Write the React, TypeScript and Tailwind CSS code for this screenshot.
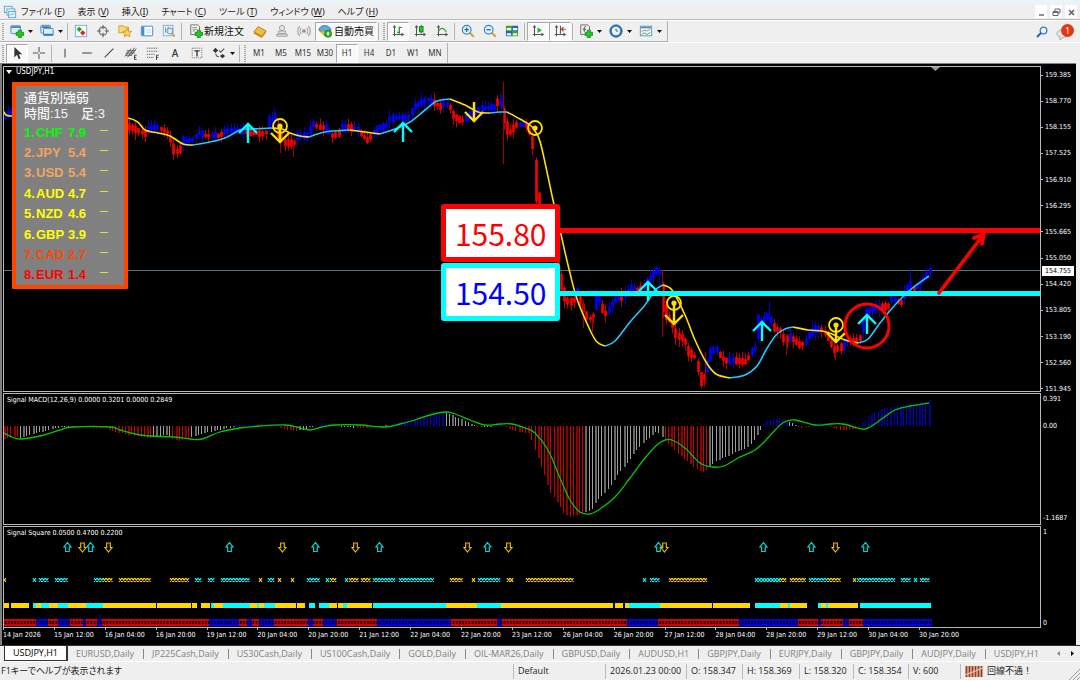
import type { ReactNode } from 'react';
import clsx from 'clsx';

type Point = [number, number];
type Waypoint = [number, number, string];
type Span = [number, number, 'y' | 'c' | 'r' | 'b'];

const BAR = 3.177;
const COLORS = { y: '#ffd700', c: '#00ffff', r: '#e00000', b: '#0000f0' };

// Price path: x, middle of the candle, r = bearish / b = bullish
const PRICE: Waypoint[] = [
  [4, 118, 'b'], [10, 112, 'b'], [14, 114, 'r'], [130, 127, 'r'], [137, 130, 'r'], [145, 134, 'r'], [149, 128, 'b'], [157, 127, 'b'],
  [163, 130, 'r'], [168, 133, 'r'], [171, 141, 'r'], [174, 151, 'r'], [179, 152, 'r'], [182, 141, 'b'], [192, 140, 'b'],
  [199, 133, 'b'], [207, 136, 'r'], [213, 135, 'b'], [219, 136, 'r'], [225, 131, 'b'], [240, 130, 'b'], [250, 133, 'r'],
  [265, 134, 'r'], [269, 121, 'b'], [275, 118, 'b'], [278, 130, 'r'], [284, 143, 'r'], [294, 143, 'r'], [297, 136, 'b'],
  [308, 136, 'b'], [312, 124, 'b'], [319, 127, 'r'], [327, 128, 'b'], [331, 136, 'r'], [338, 134, 'r'], [342, 127, 'b'],
  [350, 128, 'r'], [357, 129, 'b'], [361, 134, 'r'], [368, 141, 'r'], [372, 134, 'b'], [378, 128, 'b'], [386, 126, 'b'],
  [390, 118, 'b'], [402, 118, 'b'], [409, 117, 'b'], [414, 107, 'b'], [420, 103, 'b'], [428, 99, 'b'], [434, 103, 'r'],
  [441, 107, 'r'], [444, 102, 'b'], [449, 106, 'r'], [454, 117, 'r'], [463, 121, 'r'], [467, 117, 'b'], [480, 109, 'b'],
  [493, 107, 'b'], [496, 108, 'r'], [499, 96, 'b'], [503, 112, 'r'], [506, 127, 'r'], [511, 133, 'r'], [515, 125, 'r'],
  [521, 124, 'b'], [527, 126, 'r'], [532, 138, 'r'], [535, 175, 'r'], [538, 205, 'r'], [545, 225, 'r'], [552, 240, 'r'],
  [558, 268, 'r'], [563, 292, 'r'], [567, 301, 'r'], [573, 302, 'r'], [577, 292, 'b'], [582, 305, 'r'], [587, 317, 'r'],
  [592, 320, 'r'], [595, 303, 'b'], [599, 300, 'b'], [602, 308, 'r'], [606, 314, 'r'], [609, 309, 'b'], [615, 300, 'b'],
  [621, 297, 'r'], [626, 294, 'b'], [632, 287, 'b'], [638, 291, 'r'], [643, 286, 'b'], [650, 278, 'b'], [656, 271, 'b'],
  [659, 268, 'b'], [662, 295, 'r'], [666, 313, 'r'], [672, 324, 'r'], [676, 335, 'r'], [684, 339, 'r'], [688, 351, 'r'],
  [695, 357, 'r'], [698, 368, 'r'], [701, 380, 'r'], [704, 377, 'r'], [707, 366, 'b'], [711, 352, 'b'], [716, 348, 'b'],
  [719, 354, 'r'], [725, 361, 'r'], [731, 360, 'b'], [738, 361, 'r'], [747, 362, 'r'], [750, 353, 'b'], [756, 347, 'b'],
  [758, 326, 'b'], [763, 320, 'b'], [769, 315, 'b'], [773, 327, 'r'], [781, 331, 'r'], [785, 343, 'r'], [788, 336, 'b'],
  [794, 340, 'r'], [800, 345, 'r'], [805, 343, 'b'], [809, 335, 'b'], [815, 329, 'b'], [823, 330, 'r'], [829, 340, 'r'],
  [834, 350, 'r'], [841, 347, 'r'], [845, 341, 'b'], [851, 340, 'r'], [859, 341, 'r'], [862, 328, 'b'], [867, 311, 'b'],
  [874, 309, 'b'], [882, 306, 'r'], [888, 307, 'r'], [891, 297, 'b'], [897, 302, 'r'], [902, 303, 'r'], [905, 291, 'b'],
  [911, 284, 'b'], [914, 291, 'r'], [918, 285, 'b'], [924, 278, 'b'], [930, 270, 'b'],
];

const MA: { color: string; points: Point[] }[] = [
  { color: '#ffe000', points: [[4, 112], [12, 116], [60, 112], [128, 118], [145, 130], [158, 133], [170, 136], [183, 144], [193, 145]] },
  { color: '#20c8ff', points: [[193, 145], [210, 142], [225, 138], [240, 130], [250, 129], [272, 128]] },
  { color: '#ffe000', points: [[272, 128], [282, 129], [290, 133], [300, 136], [309, 137]] },
  { color: '#20c8ff', points: [[309, 137], [325, 132], [350, 130]] },
  { color: '#ffe000', points: [[350, 130], [365, 132], [380, 134]] },
  { color: '#20c8ff', points: [[380, 134], [395, 129], [410, 122], [425, 110], [437, 101], [450, 99]] },
  { color: '#ffe000', points: [[450, 99], [465, 105], [478, 112], [490, 113]] },
  { color: '#20c8ff', points: [[490, 113], [500, 112], [507, 112]] },
  { color: '#ffe000', points: [[507, 112], [520, 119], [530, 125], [535, 131], [541, 145], [553, 200], [560, 230], [568, 265], [577, 299], [590, 330], [597, 342], [605, 346]] },
  { color: '#20c8ff', points: [[605, 346], [615, 341], [630, 322], [645, 305], [655, 290], [663, 285]] },
  { color: '#ffe000', points: [[663, 285], [672, 290], [685, 315], [695, 340], [706, 362], [716, 374], [730, 378]] },
  { color: '#20c8ff', points: [[730, 378], [745, 375], [757, 366], [766, 350], [776, 335], [785, 329], [793, 327]] },
  { color: '#ffe000', points: [[793, 327], [808, 330], [822, 331], [832, 334], [845, 340], [858, 343]] },
  { color: '#20c8ff', points: [[858, 343], [868, 339], [880, 323], [895, 305], [910, 290], [929, 276]] },
];

const MACD: Waypoint[] = [
  [4, 439, 'r'], [17, 437, 'r'], [19, 438, 'g'], [35, 434, 'g'], [48, 430, 'g'], [62, 427, 'g'], [76, 427, 'r'], [107, 428, 'r'],
  [112, 431, 'r'], [125, 434, 'r'], [150, 438, 'r'], [155, 436, 'g'], [168, 435, 'g'], [172, 438, 'r'], [179, 441, 'r'],
  [189, 438, 'r'], [192, 437, 'g'], [210, 432, 'g'], [233, 427, 'g'], [236, 425, 'b'], [276, 424, 'b'], [282, 428, 'r'],
  [293, 431, 'r'], [303, 430, 'g'], [311, 427, 'g'], [315, 425, 'b'], [330, 424, 'b'], [345, 427, 'g'], [362, 428, 'r'],
  [378, 427, 'g'], [392, 424, 'b'], [410, 420, 'b'], [425, 416, 'b'], [443, 412, 'b'], [449, 414, 'g'], [460, 418, 'g'],
  [474, 425, 'g'], [479, 427, 'r'], [488, 427, 'g'], [497, 423, 'b'], [503, 424, 'b'], [508, 428, 'r'], [520, 432, 'r'],
  [530, 433, 'r'], [535, 448, 'r'], [545, 475, 'r'], [550, 491, 'r'], [560, 505, 'r'], [563, 512, 'r'], [571, 517, 'r'],
  [582, 513, 'r'], [585, 512, 'g'], [592, 510, 'g'], [598, 500, 'g'], [608, 490, 'g'], [617, 477, 'g'], [627, 464, 'g'],
  [637, 450, 'g'], [647, 440, 'g'], [658, 431, 'g'], [664, 439, 'g'], [667, 442, 'r'], [680, 455, 'r'], [700, 471, 'r'],
  [705, 472, 'r'], [711, 466, 'g'], [716, 461, 'g'], [727, 457, 'g'], [738, 451, 'g'], [747, 448, 'g'], [753, 443, 'g'],
  [761, 430, 'g'], [766, 421, 'b'], [780, 418, 'b'], [787, 421, 'b'], [790, 422, 'g'], [796, 425, 'g'], [800, 428, 'r'],
  [806, 427, 'r'], [812, 424, 'b'], [825, 423, 'b'], [832, 427, 'r'], [840, 430, 'r'], [857, 429, 'r'], [864, 422, 'b'],
  [872, 414, 'b'], [880, 410, 'b'], [890, 407, 'b'], [900, 406, 'b'], [907, 404, 'b'], [920, 404, 'b'], [930, 400, 'b'],
];

const MACD_SIGNAL: Point[] = [
  [4, 433], [12, 437], [20, 439], [40, 436], [60, 430], [73, 427], [110, 427], [120, 430], [135, 434], [150, 436], [175, 437],
  [190, 439], [202, 439], [220, 432], [240, 428], [260, 426], [285, 425], [300, 428], [310, 430], [322, 427], [335, 425],
  [360, 425], [385, 427], [400, 424], [415, 420], [430, 415], [445, 412], [455, 414], [470, 420], [485, 425], [500, 424],
  [512, 424], [525, 428], [535, 433], [548, 450], [560, 478], [570, 500], [580, 512], [590, 514], [600, 509], [615, 497],
  [630, 478], [645, 458], [658, 444], [665, 440], [672, 440], [685, 448], [700, 463], [712, 467], [724, 466], [738, 458],
  [755, 450], [766, 440], [780, 425], [787, 421], [795, 420], [815, 425], [830, 424], [843, 424], [862, 429], [870, 427],
  [883, 418], [895, 410], [910, 406], [929, 403],
];

const UP_SIGNALS = [67, 90, 229, 315, 379, 487, 658, 763, 811, 865];
const DOWN_SIGNALS = [82, 108, 282, 355, 467, 508, 664, 835];

const CROSSES: Span[] = [
  [3, 6, 'y'], [33, 36, 'c'], [39, 49, 'c'], [55, 68, 'c'], [94, 103, 'c'], [103, 113, 'y'], [119, 136, 'y'], [138, 151, 'y'],
  [170, 187, 'y'], [195, 202, 'c'], [208, 214, 'c'], [221, 250, 'c'], [259, 262, 'y'], [268, 275, 'c'], [278, 281, 'y'],
  [291, 294, 'y'], [307, 320, 'c'], [326, 330, 'c'], [330, 336, 'y'], [345, 349, 'c'], [349, 359, 'y'], [361, 371, 'y'],
  [373, 396, 'c'], [399, 434, 'c'], [450, 463, 'y'], [472, 475, 'y'], [478, 501, 'c'], [507, 514, 'y'], [526, 574, 'y'],
  [643, 646, 'c'], [650, 660, 'c'], [669, 708, 'y'], [755, 780, 'c'], [780, 787, 'y'], [790, 806, 'y'], [809, 828, 'c'],
  [828, 841, 'y'], [853, 857, 'y'], [857, 895, 'c'], [901, 911, 'c'], [914, 917, 'c'], [920, 930, 'c'],
];

const BANDS: Span[] = [
  [4, 9, 'y'], [11, 29, 'y'], [33, 36, 'c'], [36, 41, 'y'], [41, 49, 'c'], [49, 58, 'y'], [58, 68, 'c'], [68, 86, 'y'],
  [86, 103, 'c'], [103, 156, 'y'], [157, 191, 'y'], [192, 197, 'y'], [201, 210, 'y'], [211, 214, 'c'], [214, 223, 'y'],
  [223, 250, 'c'], [250, 257, 'y'], [257, 259, 'c'], [259, 264, 'y'], [264, 275, 'c'], [275, 296, 'y'], [297, 305, 'y'],
  [309, 315, 'c'], [319, 329, 'c'], [329, 337, 'y'], [338, 343, 'y'], [343, 347, 'c'], [347, 372, 'y'], [373, 446, 'c'],
  [446, 477, 'y'], [477, 501, 'c'], [501, 613, 'y'], [615, 623, 'y'], [625, 629, 'y'], [629, 660, 'c'], [660, 712, 'y'],
  [713, 750, 'y'], [755, 780, 'c'], [780, 788, 'y'], [788, 790, 'c'], [790, 807, 'y'], [818, 821, 'c'], [821, 826, 'y'],
  [826, 828, 'c'], [828, 858, 'y'], [860, 931, 'c'],
];

const SQUARES: Span[] = [
  [4, 36, 'r'], [36, 48, 'b'], [48, 58, 'r'], [58, 70, 'b'], [70, 83, 'r'], [83, 86, 'b'], [86, 97, 'r'], [97, 102, 'b'],
  [102, 209, 'r'], [209, 239, 'b'], [239, 247, 'r'], [247, 252, 'b'], [252, 259, 'r'], [259, 274, 'b'], [274, 308, 'r'],
  [308, 313, 'b'], [313, 323, 'r'], [323, 337, 'b'], [337, 377, 'r'], [377, 451, 'b'], [451, 497, 'r'], [497, 502, 'b'],
  [502, 627, 'r'], [627, 658, 'b'], [658, 739, 'r'], [739, 798, 'b'], [798, 818, 'r'], [818, 821, 'b'], [821, 843, 'r'],
  [843, 849, 'b'], [849, 863, 'r'], [863, 932, 'b'],
];

const STRENGTH = [
  { rank: 1, code: 'CHF', value: '7.9', color: 'text-[#00ff00]' },
  { rank: 2, code: 'JPY', value: '5.4', color: 'text-[#f4a460]' },
  { rank: 3, code: 'USD', value: '5.4', color: 'text-[#f4a460]' },
  { rank: 4, code: 'AUD', value: '4.7', color: 'text-[#ffff00]' },
  { rank: 5, code: 'NZD', value: '4.6', color: 'text-[#ffff00]' },
  { rank: 6, code: 'GBP', value: '3.9', color: 'text-[#ffff00]' },
  { rank: 7, code: 'CAD', value: '2.7', color: 'text-[#ff4500]' },
  { rank: 8, code: 'EUR', value: '1.4', color: 'text-[#ff0000]' },
];

const PRICES = ['159.385', '158.770', '158.155', '157.525', '156.910', '156.295', '155.665', '155.050', '154.420', '153.805', '153.190', '152.560', '151.945'];

const TIMES = [
  '14 Jan 2026', '15 Jan 12:00', '16 Jan 04:00', '16 Jan 20:00', '19 Jan 12:00', '20 Jan 04:00', '20 Jan 20:00', '21 Jan 12:00',
  '22 Jan 04:00', '22 Jan 20:00', '23 Jan 12:00', '26 Jan 04:00', '26 Jan 20:00', '27 Jan 12:00', '28 Jan 04:00', '28 Jan 20:00',
  '29 Jan 12:00', '30 Jan 04:00', '30 Jan 20:00',
];

const MENUS = [
  ['ファイル (', 'F'], ['表示 (', 'V'], ['挿入(', 'I'], ['チャート (', 'C'], ['ツール (', 'T'], ['ウィンドウ (', 'W'], ['ヘルプ (', 'H'],
];

const TABS = [
  'USDJPY,H1', 'EURUSD,Daily', 'JP225Cash,Daily', 'US30Cash,Daily', 'US100Cash,Daily', 'GOLD,Daily', 'OIL-MAR26,Daily', 'GBPUSD,Daily',
  'AUDUSD,H1', 'GBPJPY,Daily', 'EURJPY,Daily', 'GBPJPY,Daily', 'AUDJPY,Daily', 'USDJPY,H1',
];

const PERIODS = ['M1', 'M5', 'M15', 'M30', 'H1', 'H4', 'D1', 'W1', 'MN'];

/* ---------- chart helpers ---------- */

function smooth(points: Point[]) {
  let d = `M${points[0][0]} ${points[0][1]}`;
  for (let i = 0; i < points.length - 1; i++) {
    const p0 = points[Math.max(i - 1, 0)];
    const p1 = points[i];
    const p2 = points[i + 1];
    const p3 = points[Math.min(i + 2, points.length - 1)];
    d += ` C${p1[0] + (p2[0] - p0[0]) / 6} ${p1[1] + (p2[1] - p0[1]) / 6} ${p2[0] - (p3[0] - p1[0]) / 6} ${p2[1] - (p3[1] - p1[1]) / 6} ${p2[0]} ${p2[1]}`;
  }
  return d;
}

function sample(path: Waypoint[]) {
  const out: { x: number; y: number; kind: string; i: number }[] = [];
  let seg = 0;
  for (let i = 0; 5 + i * BAR < 931; i++) {
    const x = 5 + i * BAR;
    while (seg < path.length - 2 && path[seg + 1][0] <= x) seg++;
    const [x0, y0, k0] = path[seg];
    const [x1, y1, k1] = path[seg + 1];
    const t = Math.min((x - x0) / (x1 - x0), 1);
    out.push({ x, y: y0 + (y1 - y0) * t, kind: t > 0.6 ? k1 : k0, i });
  }
  return out;
}

function noise(i: number) {
  const n = Math.sin(i * 12.9898) * 43758.5453;
  return n - Math.floor(n);
}

function UpArrow({ x, y }: { x: number; y: number }) {
  return <path d={`M${x} ${y + 19}V${y}M${x - 9} ${y + 9}L${x} ${y}L${x + 9} ${y + 9}`} fill="none" stroke="#00ffff" strokeWidth="2.4" />;
}

function DownArrow({ x, y, from }: { x: number; y: number; from: number }) {
  return <path d={`M${x} ${from}V${y}M${x - 9} ${y - 9}L${x} ${y}L${x + 9} ${y - 9}`} fill="none" stroke="#ffe000" strokeWidth="2.4" />;
}

function Ring({ x, y }: { x: number; y: number }) {
  return (
    <>
      <circle cx={x} cy={y} r="7" fill="none" stroke="#ffe000" strokeWidth="1.8" />
      <circle cx={x} cy={y} r="2.6" fill="#ffe000" />
    </>
  );
}

function PriceChart() {
  return (
    <svg viewBox="4 67 1036 324" preserveAspectRatio="none" className="block h-full w-full" role="img" aria-label="USDJPY H1">
      <path d="M4 270.5H1040" stroke="#5f6f80" strokeWidth="1" />
      {sample(PRICE).map(({ x, y, kind, i }, n, all) => {
        const step = n > 0 ? Math.abs(y - all[n - 1].y) : 0;
        const body = Math.max(3 + noise(i) * 5, step * 1.1);
        const up = noise(i + 400) * 6;
        const down = noise(i + 900) * 7;
        return (
          <g key={i}>
            <rect x={Math.round(x)} y={y - body / 2 - up} width="1" height={body + up + down} fill={kind === 'b' ? '#0000c8' : '#c00000'} />
            <rect x={Math.round(x) - 0.8} y={y - body / 2} width="2.6" height={body} fill={kind === 'b' ? '#0000ff' : '#ff0000'} />
          </g>
        );
      })}
      <path d="M503.5 82V164M293.5 140V157M280.5 140V153M705.5 352V384M662.5 270V337M786.5 335V355M583.5 300V328M592.5 315V332M835.5 345V360" stroke="#a00000" strokeWidth="1" />
      <path d="M274.5 108V125M389.5 110V125M659.5 266V285M769.5 301V330M910.500 270V298M500.500 93V108" stroke="#0000d0" strokeWidth="1" />
      {MA.map((m, i) => (
        <path key={i} d={smooth(m.points)} fill="none" stroke={m.color} strokeWidth="1.6" />
      ))}
      <UpArrow x={248} y={124} />
      <UpArrow x={403} y={123} />
      <UpArrow x={648} y={282} />
      <UpArrow x={762} y={322} />
      <UpArrow x={867} y={315} />
      <DownArrow x={280} y={142} from={126} />
      <DownArrow x={474} y={121} from={102} />
      <DownArrow x={674} y={324} from={303} />
      <DownArrow x={836} y={342} from={325} />
      <Ring x={280} y={126} />
      <Ring x={535} y={128} />
      <Ring x={674} y={303} />
      <Ring x={836} y={325} />
      <path d="M556 230.5H1040" stroke="#ff0000" strokeWidth="5" />
      <path d="M556 293.5H1040" stroke="#00ffff" strokeWidth="5" />
      <circle cx="867" cy="326" r="22" fill="none" stroke="#ff0000" strokeWidth="3" />
      <path d="M939 293L984 234M974 238L984 234L982 244" fill="none" stroke="#ff0000" strokeWidth="3.6" strokeLinecap="round" />
      <path d="M931 67H940L935.500 71Z" fill="#8c9cab" />
    </svg>
  );
}

function MacdChart() {
  const fills: Record<string, [string, string]> = { r: ['#d00000', '#900000'], g: ['#a0a0a0', '#686868'], b: ['#0000c8', '#000098'] };
  return (
    <svg viewBox="4 394 1036 130" preserveAspectRatio="none" className="block h-full w-full" role="img" aria-label="MACD">
      <g shapeRendering="crispEdges">
        {sample(MACD).map(({ x, y, kind, i }) => (
          <rect
            key={i}
            x={Math.round(x) - 1}
            y={Math.min(y, 426)}
            width={i % 3 === 0 ? 2 : 1}
            height={Math.max(Math.abs(y - 426), 1)}
            fill={fills[kind][i % 3 === 0 ? 1 : 0]}
          />
        ))}
      </g>
      <path d={smooth(MACD_SIGNAL)} fill="none" stroke="#00c800" strokeWidth="1.3" />
    </svg>
  );
}

function SquareChart() {
  return (
    <svg viewBox="4 527 1036 100" preserveAspectRatio="none" className="block h-full w-full" role="img" aria-label="Signal Square">
      <defs>
        <pattern id="cells" x="4" y="619" width={BAR} height="7" patternUnits="userSpaceOnUse">
          <path d="M0.800 2L2.400 5M2.400 2L0.800 5" stroke="#000" strokeWidth="1.100" />
        </pattern>
      </defs>
      {UP_SIGNALS.map((x) => (
        <path key={x} d={`M${x + 0.5} 542.500L${x + 4} 547H${x + 2.3}V551.500H${x - 1.3}V547H${x - 3}Z`} fill="none" stroke="#00d8d8" strokeWidth="1.200" />
      ))}
      {DOWN_SIGNALS.map((x) => (
        <path key={x} d={`M${x + 0.5} 552L${x + 4} 547.500H${x + 2.3}V543H${x - 1.3}V547.500H${x - 3}Z`} fill="none" stroke="#e0b800" strokeWidth="1.200" />
      ))}
      {CROSSES.map(([from, to, c]) => {
        const marks: string[] = [];
        for (let x = from; x < to - 1; x += BAR) marks.push(`M${x} 578.200l3 3.600m0 -3.600l-3 3.600`);
        return <path key={from} d={marks.join('')} fill="none" stroke={COLORS[c]} strokeWidth="1.100" />;
      })}
      {BANDS.map(([from, to, c]) => (
        <rect key={from} x={from} y="603" width={to - from} height="5" fill={COLORS[c]} />
      ))}
      {SQUARES.map(([from, to, c]) => (
        <rect key={from} x={from} y="619" width={to - from} height="7" fill={COLORS[c]} />
      ))}
      <rect x="4" y="619" width="928" height="7" fill="url(#cells)" />
    </svg>
  );
}

/* ---------- toolbar icons ---------- */

const plus = <path d="M9.500 7h3.500v2.500h2.500v3.500H13v2.500H9.500V13H7V9.500h2.500z" fill="#18d018" stroke="#087808" strokeWidth=".8" />;
const axes = <path d="M4 2v12M2 12h12M2.500 4L4 2l1.500 2M12 10.500l2 1.500-2 1.500" fill="none" stroke="#555" strokeWidth="1.200" />;

const ICONS: Record<string, ReactNode> = {
  app: (
    <g fill="#e8f4fc" stroke="#5a9fd0">
      <rect x="1.500" y="1.500" width="9" height="7" />
      <rect x="4.500" y="4.500" width="9" height="7" />
      <rect x="6.500" y="7.500" width="8" height="7" />
      <path d="M8 12l2-2 1 1 2-2" fill="none" />
    </g>
  ),
  newChart: (
    <>
      <rect x="1" y="2" width="11" height="9" rx="1" fill="#dcebf7" stroke="#4c83b2" />
      <path d="M1 3.500h11" stroke="#4c83b2" strokeWidth="2" />
      {plus}
    </>
  ),
  profiles: (
    <g fill="#dceefb" stroke="#3f7cb5">
      <rect x="1" y="1.500" width="11" height="9" rx="1" />
      <rect x="4" y="5" width="11" height="8" rx="1" />
      <path d="M2 3.500h9M4 12h11" strokeWidth="2" />
    </g>
  ),
  market: (
    <>
      <rect x="1.500" y="1.500" width="13" height="13" fill="#f6fafe" stroke="#7aa7d0" />
      <path d="M6 3L9 6 6 9 3 6z" fill="#10b010" />
      <path d="M10 7l3 3-3 3-3-3z" fill="#e02020" />
    </>
  ),
  crosshair: (
    <g fill="none" stroke="#666" strokeWidth="1.300">
      <circle cx="8" cy="8" r="4.500" />
      <path d="M8 1v5M8 10v5M1 8h5M10 8h5" />
    </g>
  ),
  navigator: (
    <>
      <path d="M1 2h5l1 1.500h5V10H1z" fill="#fbd878" stroke="#c99a30" />
      <path d="M10.500 5l1.500 3.200 3.500.4-2.600 2.300.8 3.600-3.200-1.800-3.200 1.800.8-3.600L5.500 8.600l3.500-.4z" fill="#ffd54a" stroke="#bb851b" strokeWidth=".8" />
    </>
  ),
  terminal: (
    <>
      <rect x="1.500" y="2.500" width="13" height="11" rx="1" fill="#fff" stroke="#3b7bb5" />
      <path d="M2 3h3v10H2z" fill="#4090d0" />
      <path d="M7 6h6M7 8h6M7 10h6" stroke="#bcd6ec" />
    </>
  ),
  tester: (
    <>
      <rect x="1.500" y="1.500" width="11" height="12" fill="#eef6fc" stroke="#7ba5cb" />
      <path d="M4 4v6M7 3v6" stroke="#5590c0" />
      <circle cx="9" cy="8" r="3.500" fill="#cfe7f7" fillOpacity=".8" stroke="#4c86b8" />
      <path d="M11.500 11l3 3.500" stroke="#d9a520" strokeWidth="2" />
    </>
  ),
  order: (
    <>
      <path d="M2 1h8l2 2v9H2z" fill="#f3f3f3" stroke="#666" />
      <path d="M4 4h5M4 6h5M4 8h3" stroke="#888" />
      {plus}
    </>
  ),
  book: (
    <>
      <path d="M1 9l5-6 9 5-5 6z" fill="#f0bd3c" stroke="#a87510" />
      <path d="M1 9v2l9 5 5-6V8l-5 6z" fill="#c98d16" />
    </>
  ),
  server: (
    <g fill="#e4e4e4" stroke="#999">
      <circle cx="8" cy="4.500" r="3" />
      <path d="M4 8h8v3H4zM2 11.500h12V14H2z" />
    </g>
  ),
  signal: (
    <g fill="none" stroke="#999" strokeWidth="1.200">
      <circle cx="8" cy="8" r="1.500" fill="#888" />
      <path d="M5 11.500a5 5 0 010-7M11 4.500a5 5 0 010 7M3 13.500a8 8 0 010-11M13 2.500a8 8 0 010 11" />
    </g>
  ),
  autoTrade: (
    <>
      <path d="M1 7c1-7 12-7 14 0l-3 2H4z" fill="#5aaede" stroke="#2d76aa" />
      <path d="M2 8l6 6 5-6z" fill="#f2c744" stroke="#b98b1d" />
      <circle cx="11.500" cy="11" r="4" fill="#25bd25" stroke="#118011" />
      <path d="M11.500 8.500l2 2.200h-1.200v2.300h-1.600v-2.300H9.500z" fill="#fff" />
    </>
  ),
  bars: (
    <>
      {axes}
      <path d="M9.500 3v8M9.500 4h3M7 9.500h2.500" fill="none" stroke="#0c9c0c" strokeWidth="1.400" />
    </>
  ),
  candles: (
    <>
      {axes}
      <path d="M9.500 1v10" stroke="#087808" />
      <rect x="7.500" y="3" width="4" height="6" fill="#20cc20" stroke="#087808" />
    </>
  ),
  line: (
    <>
      {axes}
      <path d="M4 8c3-4 6-4 9 1" fill="none" stroke="#2ba02b" strokeWidth="1.400" />
    </>
  ),
  zoomIn: (
    <>
      <path d="M10 10l4.500 4.500" stroke="#d5a62a" strokeWidth="2.600" />
      <circle cx="6.500" cy="6.500" r="5" fill="#dff1fc" stroke="#3d85bd" strokeWidth="1.300" />
      <path d="M4 6.500h5M6.500 4v5" stroke="#2a6ea8" strokeWidth="1.500" />
    </>
  ),
  zoomOut: (
    <>
      <path d="M10 10l4.500 4.500" stroke="#d5a62a" strokeWidth="2.600" />
      <circle cx="6.500" cy="6.500" r="5" fill="#dff1fc" stroke="#3d85bd" strokeWidth="1.300" />
      <path d="M4 6.500h5" stroke="#2a6ea8" strokeWidth="1.500" />
    </>
  ),
  tile: (
    <>
      <path d="M1 2h7v6H1zM8 8h7v6H8z" fill="#43a51d" />
      <path d="M8 2h7v6H8zM1 8h7v6H1z" fill="#2b62c4" />
      <path d="M2 4.500h5v2.500H2zM9 4.500h5v2.500H9zM2 10.500h5V13H2zM9 10.500h5V13H9z" fill="#e8f4ff" />
    </>
  ),
  scroll: (
    <>
      {axes}
      <path d="M7.500 4l5 3.200-5 3.200z" fill="#1db51d" />
    </>
  ),
  shift: (
    <>
      {axes}
      <path d="M8.500 2v9" stroke="#555" strokeWidth="1.200" />
      <path d="M14.500 6H10m2-2.500L9.500 6 12 8.500" fill="none" stroke="#c04818" strokeWidth="1.400" />
    </>
  ),
  indicators: (
    <>
      <path d="M2 1h8l2 2v9H2z" fill="#eee" stroke="#666" />
      <path d="M8 3c-2-.5-2 1-2 3v3M4.500 6H8" fill="none" stroke="#444" />
      {plus}
    </>
  ),
  clock: (
    <>
      <circle cx="8" cy="8" r="7" fill="#2d7cc8" stroke="#185590" />
      <circle cx="8" cy="8" r="4.800" fill="#f2f8fd" />
      <path d="M8 5v3h2.500" fill="none" stroke="#444" />
    </>
  ),
  template: (
    <>
      <rect x="1.500" y="2.500" width="13" height="11" fill="#f5fafd" stroke="#5592c4" />
      <path d="M2 4h12" stroke="#5592c4" strokeWidth="2" />
      <path d="M3 8.500l3-1.500 3 1 4-2" fill="none" stroke="#c07030" />
      <path d="M3 12l3-2 3 2 4-2.500" fill="none" stroke="#30a040" />
    </>
  ),
  cursor: <path d="M5 1v12l3-3 2 5 2-1-2-4.500h4z" fill="#333" />,
  cross: <path d="M8 1v6M8 9v6M1 8h6M9 8h6" stroke="#555" strokeWidth="1.200" />,
  vline: <path d="M8 3v10" stroke="#444" strokeWidth="1.200" />,
  hline: <path d="M2.500 8h11" stroke="#444" strokeWidth="1.200" />,
  trend: <path d="M3 13L13 3" stroke="#444" strokeWidth="1.200" />,
  channel: (
    <>
      <path d="M1 12L8 3M4 13l8-11M8 11l6-8M2 8h10M3 5.500h10M2 10.500h7" fill="none" stroke="#444" />
      <path d="M14.500 10.500H12v5h2.500M12 13h2" fill="none" stroke="#333" />
    </>
  ),
  fibo: (
    <>
      <path d="M1 2.500h13M1 6h13M1 9.500h9M1 13h8" stroke="#555" strokeDasharray="1.500 1" />
      <path d="M14.500 10.500H12V16M12 13h2" fill="none" stroke="#333" />
    </>
  ),
  label: (
    <>
      <rect x="2.500" y="2.500" width="11" height="11" fill="none" stroke="#777" strokeDasharray="1.500 1" />
      <path d="M5 5.500h6M8 5.500V12" stroke="#333" strokeWidth="1.500" />
    </>
  ),
  shapes: (
    <>
      <path d="M4 2l3 3-3 3-3-3zM12 9l3 2.500-3 2.500-3-2.500z" fill="#333" />
      <path d="M8 5l2 2 4-4M4 9l2 3h2" fill="none" stroke="#555" strokeWidth="1.300" />
    </>
  ),
};

function Icon({ name }: { name: string }) {
  return (
    <svg viewBox="0 0 16 16" className="h-[14px] w-[14px] shrink-0" aria-hidden="true">
      {ICONS[name]}
    </svg>
  );
}

function Tool({ name, label, pressed, menu }: { name: string; label: string; pressed?: boolean; menu?: boolean }) {
  return (
    <button
      type="button"
      aria-label={label}
      className={clsx(
        'flex h-[19px] shrink-0 items-center justify-center border',
        menu ? 'w-[30px] gap-1' : 'w-[22px]',
        pressed ? 'border-[#a8a8a8] border-r-white border-b-white bg-[#f9f9f9]' : 'border-transparent',
      )}
    >
      <Icon name={name} />
      {menu && <Caret />}
    </button>
  );
}

function Caret() {
  return (
    <svg viewBox="0 0 5 3" className="h-[3px] w-[5px] shrink-0" aria-hidden="true">
      <path d="M0 0h5L2.500 3z" fill="#111" />
    </svg>
  );
}

function Separator() {
  return <span className="mr-[2px] ml-px h-[17px] w-px shrink-0 bg-[#b4b4b4]" />;
}

function Grip() {
  return <span className="mx-[2px] h-[17px] w-[2px] shrink-0 bg-[repeating-linear-gradient(#a8a8a8_0_1px,#e8e8e8_1px_2px)]" />;
}

/* ---------- window parts ---------- */

function MenuBar() {
  return (
    <header className="flex h-4 items-center border-b border-[#b8b8b8] pr-[3px] pl-[3px]">
      <Icon name="app" />
      <nav className="ml-1 flex flex-1 items-center gap-[13px] text-[9px] leading-[14px] whitespace-nowrap text-[#222] [font-feature-settings:'palt']">
        {MENUS.map(([text, key]) => (
          <button key={key} type="button">
            {text}
            <u>{key}</u>)
          </button>
        ))}
      </nav>
      <div className="flex gap-[3px] text-[#606878]">
        <button type="button" aria-label="Minimize" className="flex h-[13px] w-3 items-center justify-center bg-white">
          <svg viewBox="0 0 12 12" className="h-3 w-3"><path d="M4 9h5" stroke="currentColor" strokeWidth="1.500" /></svg>
        </button>
        <button type="button" aria-label="Restore" className="flex h-[13px] w-3 items-center justify-center bg-white">
          <svg viewBox="0 0 12 12" className="h-3 w-3"><path d="M5 5V3h5v4H8M3 5.500h5v4H3zM3 6.500h5" fill="none" stroke="currentColor" /></svg>
        </button>
        <button type="button" aria-label="Close" className="flex h-[13px] w-3 items-center justify-center bg-white">
          <svg viewBox="0 0 12 12" className="h-3 w-3"><path d="M4 4l5 5M9 4l-5 5" stroke="currentColor" strokeWidth="1.700" /></svg>
        </button>
      </div>
    </header>
  );
}

function MainToolbar() {
  return (
    <div className="flex h-[22px] items-center border-t border-white">
      <div className="flex h-full items-center border-r border-b border-[#b0b0b0] pr-[2px]">
        <Grip />
        <Tool name="newChart" label="新規チャート" menu />
        <Tool name="profiles" label="プロファイル" menu />
        <Separator />
        <Tool name="market" label="気配値表示" />
        <Tool name="crosshair" label="データウィンドウ" />
        <Tool name="navigator" label="ナビゲーター" />
        <Tool name="terminal" label="ターミナル" />
        <Tool name="tester" label="ストラテジーテスター" />
        <Separator />
        <button type="button" className="flex h-[19px] w-[65px] shrink-0 items-center justify-center gap-px text-[10px] text-[#111]">
          <Icon name="order" />
          新規注文
        </button>
        <Tool name="book" label="メタエディター" />
        <Tool name="server" label="マーケット" />
        <Tool name="signal" label="シグナル" />
        <button
          type="button"
          aria-pressed="true"
          className="flex h-[19px] w-[62px] shrink-0 items-center justify-center gap-[2px] border border-[#a8a8a8] border-r-white border-b-white bg-[#f9f9f9] text-[10px] text-[#111]"
        >
          <Icon name="autoTrade" />
          自動売買
        </button>
        <Separator />
        <Grip />
        <Tool name="bars" label="バーチャート" pressed />
        <Tool name="candles" label="ローソク足" />
        <Tool name="line" label="ラインチャート" />
        <Separator />
        <Tool name="zoomIn" label="拡大" />
        <Tool name="zoomOut" label="縮小" />
        <Tool name="tile" label="整列" />
        <Separator />
        <Tool name="scroll" label="自動スクロール" pressed />
        <Tool name="shift" label="チャートシフト" pressed />
        <Separator />
        <Tool name="indicators" label="インディケータ" menu />
        <Tool name="clock" label="時間軸" menu />
        <Tool name="template" label="定型チャート" menu />
      </div>
      <div className="ml-auto flex items-center gap-2 pr-[6px]">
        <button type="button" aria-label="検索">
          <svg viewBox="0 0 12 12" className="h-3 w-3">
            <circle cx="7.500" cy="4.500" r="3.300" fill="#eef6ff" stroke="#3a78c0" strokeWidth="1.300" />
            <path d="M5 7l-4 4" stroke="#2a62b0" strokeWidth="2" />
          </svg>
        </button>
        <button type="button" aria-label="通知" className="relative h-4 w-[18px]">
          <svg viewBox="0 0 18 16" className="h-4 w-[18px]">
            <path d="M1 9.500c0-5 11-5 11 0 0 3-3 4-5 4L4 16v-3c-2-.5-3-2-3-3.500z" fill="#e4e4e4" stroke="#aaa" />
          </svg>
          <span className="absolute top-0 right-0 flex h-[13px] w-[13px] items-center justify-center rounded-full bg-[#e03810] text-[9px] leading-none text-white">1</span>
        </button>
      </div>
    </div>
  );
}

function DrawToolbar() {
  return (
    <div className="flex h-[21px] items-center border-t border-white text-[8px] text-[#333]">
      <div className="flex h-full items-center border-r border-[#b0b0b0] pr-px">
        <Grip />
        <Tool name="cursor" label="カーソル" pressed />
        <Tool name="cross" label="クロスヘア" />
        <Separator />
        <Tool name="vline" label="垂直線" />
        <Tool name="hline" label="水平線" />
        <Tool name="trend" label="トレンドライン" />
        <Tool name="channel" label="チャネル" />
        <Tool name="fibo" label="フィボナッチ" />
        <button type="button" className="h-[19px] w-[22px] text-[10px] font-medium">A</button>
        <Tool name="label" label="ラベル" />
        <Tool name="shapes" label="矢印" menu />
        <Separator />
        <Grip />
        {PERIODS.map((p) => (
          <button
            key={p}
            type="button"
            className={clsx(
              'h-[19px] w-[22px] shrink-0 border',
              p === 'H1' ? 'border-[#a8a8a8] border-r-white border-b-white bg-[#f9f9f9]' : 'border-transparent',
            )}
          >
            {p}
          </button>
        ))}
      </div>
    </div>
  );
}

function StrengthPanel() {
  return (
    <section className="absolute top-[15px] left-2 w-[116px] rounded-[1px] border-4 border-[#ff4500] bg-[#808080] px-2 pt-1">
      <div className="font-['Liberation_Sans','Noto_Sans_CJK_JP',sans-serif] text-[13px] leading-4 font-medium whitespace-pre text-[#f4f4f4]">
        <h2>通貨別強弱</h2>
        <p>時間:15　足:3</p>
      </div>
      <table className="h-[163px] w-full border-collapse font-['Liberation_Sans',sans-serif] text-[13px] leading-none font-bold">
        <tbody>
          {STRENGTH.map((s) => (
            <tr key={s.code} className={s.color}>
              <td className="w-3 p-0">{s.rank}.</td>
              <td className="w-8 p-0">{s.code}</td>
              <td className="p-0">{s.value}</td>
              <td className="w-4 p-0 pb-1">
                <span className="block h-px w-2 bg-[#e8e020]" />
              </td>
            </tr>
          ))}
        </tbody>
      </table>
    </section>
  );
}

function ChartWindow() {
  return (
    <main className="mr-1 border-t border-l-2 border-[#808080] bg-black pt-[2px] pl-px font-['DejaVu_Sans_Condensed','DejaVu_Sans',sans-serif] text-[7px] leading-[10px] text-white">
      <div className="grid grid-cols-[minmax(0,1fr)_35px]">
        <div className="flex flex-col gap-px">
          <div className="relative h-[326px] border border-[#b8b8b8]">
            <PriceChart />
            <p className="absolute top-0 left-[2px] flex items-center gap-1 text-[8px]">
              <svg viewBox="0 0 6 4" className="h-1 w-[6px]"><path d="M0 0h6L3 4z" fill="#fff" /></svg>
              USDJPY,H1
            </p>
            <StrengthPanel />
            <div className="absolute top-[137px] left-[42.200%] flex w-[119px] flex-col gap-px font-['Noto_Sans_CJK_JP',sans-serif] text-[30px] leading-none">
              <p className="flex h-[58px] items-center justify-center rounded-[3px] border-[5px] border-[#ff0000] bg-white text-[#ff0000]">155.80</p>
              <p className="flex h-[58px] items-center justify-center rounded-[3px] border-[5px] border-[#00ffff] bg-white text-[#0000ff]">154.50</p>
            </div>
          </div>
          <div className="relative h-[132px] border border-[#b8b8b8]">
            <MacdChart />
            <p className="absolute top-px left-[3px]">Signal MACD(12,26,9) 0.0000 0.3201 0.0000 0.2849</p>
          </div>
          <div className="relative h-[102px] border border-[#b8b8b8]">
            <SquareChart />
            <p className="absolute top-px left-[3px]">Signal Square 0.0500 0.4700 0.2200</p>
          </div>
        </div>
        <div className="relative flex flex-col whitespace-nowrap">
          <ol className="flex h-[328px] flex-col justify-between pt-1">
            {PRICES.map((p) => (
              <li key={p} className="flex items-center gap-[2px]">
                <span className="h-px w-[2px] bg-[#b8b8b8]" />
                {p}
              </li>
            ))}
          </ol>
          <span className="absolute top-[200px] left-px w-8 bg-white pl-[3px] text-black">154.755</span>
          <div className="flex h-[129px] flex-col pl-[2px]">
            <span>0.391</span>
            <span className="mt-[17px]">0.00</span>
            <span className="mt-auto">-1.1687</span>
          </div>
          <div className="flex flex-1 flex-col justify-between pt-1 pl-[2px]">
            <span>1</span>
            <span>0</span>
          </div>
        </div>
      </div>
      <ol className="flex h-[17px] pr-[106px] whitespace-nowrap">
        {TIMES.map((t) => (
          <li key={t} className="min-w-0 flex-1">
            <span className="block h-[2px] w-px bg-[#b8b8b8]" />
            {t}
          </li>
        ))}
      </ol>
    </main>
  );
}

function ChartTabs() {
  return (
    <nav className="flex h-4 items-stretch overflow-hidden border-t border-[#333] pr-[6px] pl-1 font-['Open_Sans',sans-serif] text-[9px] leading-[14px] whitespace-nowrap text-[#808080]">
      {TABS.map((t, i) => (
        <a
          key={i}
          href="#chart"
          aria-current={i === 0 ? 'page' : undefined}
          className={clsx(
            'flex shrink-0 items-center',
            i === 0
              ? 'border-r-2 border-b border-l border-[#333] bg-white px-2 text-black'
              : 'pl-2 after:ml-[9px] after:h-[10px] after:w-px after:bg-[#888] last-of-type:after:hidden',
          )}
        >
          {t}
        </a>
      ))}
      <div className="ml-auto flex items-center gap-[11px]">
        <button type="button" aria-label="Previous tabs">
          <svg viewBox="0 0 3 5" className="h-[5px] w-[3px]"><path d="M3 0v5L0 2.500z" fill="#888" /></svg>
        </button>
        <button type="button" aria-label="Next tabs">
          <svg viewBox="0 0 3 5" className="h-[5px] w-[3px]"><path d="M0 0v5l3-2.500z" fill="#000" /></svg>
        </button>
      </div>
    </nav>
  );
}

function StatusBar() {
  const cell = 'flex h-[15px] items-center border-l border-[#bbb] pl-1';
  return (
    <footer className="flex h-[19px] items-center border-t border-white font-['Open_Sans','Noto_Sans_CJK_JP',sans-serif] text-[9px] whitespace-nowrap text-[#222]">
      <p className="min-w-0 flex-1 pl-px [font-feature-settings:'palt']">F1キーでヘルプが表示されます</p>
      <span className={clsx(cell, 'w-[92px]')}>Default</span>
      <span className={clsx(cell, 'w-[81px]')}>2026.01.23 00:00</span>
      <span className={clsx(cell, 'w-[56px]')}>O: 158.347</span>
      <span className={clsx(cell, 'w-[57px]')}>H: 158.369</span>
      <span className={clsx(cell, 'w-[54px]')}>L: 158.320</span>
      <span className={clsx(cell, 'w-[55px]')}>C: 158.354</span>
      <span className={clsx(cell, 'w-[52px]')}>V: 600</span>
      <span className={clsx(cell, 'w-[108px] gap-[3px]')}>
        <svg viewBox="0 0 19 11" className="h-[11px] w-[19px]" aria-hidden="true">
          <path d="M1.500 0v11M4.500 0v11M7.500 0v11M10.500 0v11M13.500 0v11M16.500 0v11" stroke="#a03818" strokeWidth="2" />
          <path d="M0 9L18 2" stroke="#f3d8c8" />
        </svg>
        回線不通！
      </span>
      <svg viewBox="0 0 12 12" className="h-3 w-3 self-end" aria-hidden="true">
        <path d="M1 12L12 1M5 12l7-7M9 12l3-3" stroke="#999" />
      </svg>
    </footer>
  );
}

export default function App() {
  return (
    <div className="bg-[#efefef] font-['Noto_Sans','Noto_Sans_CJK_JP',sans-serif]">
      <div className="h-1 bg-[#e9f5f9]" />
      <MenuBar />
      <MainToolbar />
      <DrawToolbar />
      <ChartWindow />
      <ChartTabs />
      <StatusBar />
    </div>
  );
}
